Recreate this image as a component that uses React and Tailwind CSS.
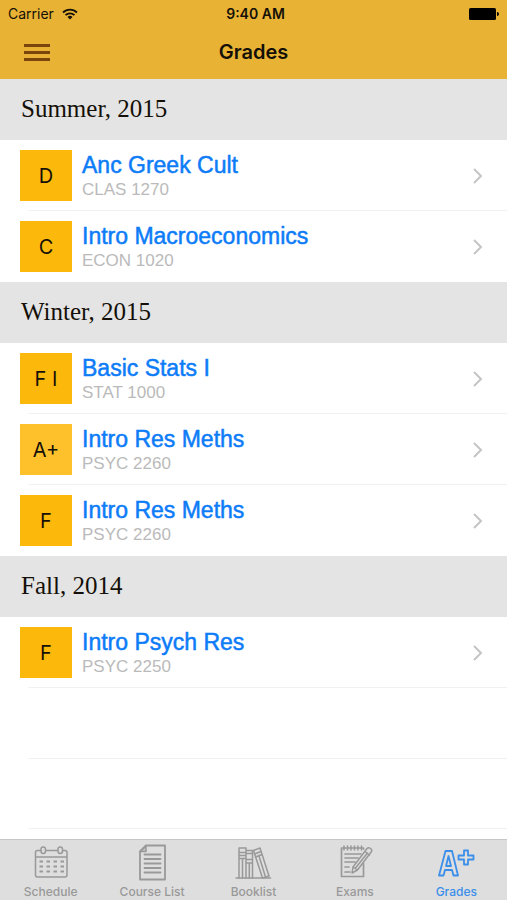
const terms = [
  {
    name: "Summer, 2015",
    courses: [
      { grade: "D", title: "Anc Greek Cult", code: "CLAS 1270" },
      { grade: "C", title: "Intro Macroeconomics", code: "ECON 1020" },
    ],
  },
  {
    name: "Winter, 2015",
    courses: [
      { grade: "F I", title: "Basic Stats I", code: "STAT 1000" },
      { grade: "A+", title: "Intro Res Meths", code: "PSYC 2260", light: true },
      { grade: "F", title: "Intro Res Meths", code: "PSYC 2260" },
    ],
  },
  {
    name: "Fall, 2014",
    courses: [{ grade: "F", title: "Intro Psych Res", code: "PSYC 2250" }],
  },
];

function Icon({ children }) {
  return (
    <svg
      aria-hidden="true"
      viewBox="0 0 36 36"
      className="h-9 w-9 overflow-visible"
      fill="none"
      stroke="currentColor"
      strokeWidth="1.5"
      strokeLinejoin="round"
      strokeLinecap="round"
    >
      {children}
    </svg>
  );
}

function ScheduleIcon() {
  return (
    <Icon>
      <path d="M8 6.5H4.5a2 2 0 0 0-2 2V31a2 2 0 0 0 2 2H32a2 2 0 0 0 2-2V8.5a2 2 0 0 0-2-2h-2.5M12.5 6.5h12M2.500 13H34" />
      <rect x="8" y="3" width="4.500" height="6.500" rx="2.200" />
      <rect x="25" y="3" width="4.500" height="6.500" rx="2.200" />
      <path
        d="M6.500 17.500h3.500M13.500 17.500h3.500M20.500 17.500H24M27.500 17.500H31M6.500 22.500h3.500M13.500 22.500h3.500M20.500 22.500H24M27.500 22.500H31M6.500 27.500h3.500M13.500 27.500h3.500M20.500 27.500H24M27.500 27.500H31"
        strokeWidth="1.800"
        strokeLinecap="butt"
      />
    </Icon>
  );
}

function CourseListIcon() {
  return (
    <Icon>
      <path d="M12 1.500h19v34H6V7.500z" strokeWidth="1.800" />
      <path d="M12 1.500v6H6z" fill="currentColor" fillOpacity="0.4" />
      <path d="M10.500 10.500h16M10.500 15h16M10.500 19.500h16M10.500 24h16M10.500 28.500h16" strokeWidth="1.800" />
    </Icon>
  );
}

function BooklistIcon() {
  return (
    <Icon>
      <path d="M1 34h34.500" />
      <path d="M4 34V4h7v30M11 6.500h6.500V34M4 8.500h7M4 11.500h7M4 14.500h7M11 9.500h6.500M11 15.500h6.500M11 19h6.500M7.500 14.500V34M14.300 19v15" />
      <path d="M18.500 6.500 25 4 34 32 27.500 34zM19.500 10l6.500-2.500M20.500 13l6.500-2.500M24 12l6.500 21" />
    </Icon>
  );
}

function ExamsIcon() {
  return (
    <Icon>
      <path d="M26.500 5V4H4.500V32.500h22V19.500" strokeWidth="1.700" />
      <path d="M7 2v4M10.500 2v4M14 2v4M17.500 2v4M21 2v4M24.500 2v4" />
      <path d="M8 10h16M8 14h13M8 18h10M8 23h4M8 28h5" strokeWidth="1.700" />
      <path d="m15 29 1-6L30 4.500q1.500-1.500 3.500 0t1 3L20.500 26zM16 23l4.500 3M28 7.500l4.500 3.500M18.500 24 30.500 9" />
    </Icon>
  );
}

function GradesIcon() {
  return (
    <Icon>
      <path d="M7.500 7h6.500L20 31.500h-4.500L14 26H7l-1.500 5.500H1zM10.500 12 8 22h5z" strokeWidth="1.800" />
      <path d="M26 6.500h4v5h5.500v4H30v5h-4v-5h-5.500v-4H26z" strokeWidth="1.800" />
    </Icon>
  );
}

const tabs = [
  { label: "Schedule", icon: ScheduleIcon },
  { label: "Course List", icon: CourseListIcon },
  { label: "Booklist", icon: BooklistIcon },
  { label: "Exams", icon: ExamsIcon },
  { label: "Grades", icon: GradesIcon, active: true },
];

function StatusBar() {
  return (
    <div className="grid h-7 grid-cols-[1fr_auto_1fr] items-center pr-1 pl-2 text-sm leading-4">
      <div className="flex items-center gap-2">
        <span>Carrier</span>
        <svg aria-label="Wi-Fi" viewBox="0 0 16 12" className="h-3 w-4" fill="none" stroke="currentColor" strokeWidth="1.800">
          <path d="M1 4.500a10 10 0 0 1 14 0M3.500 7.200a6.400 6.400 0 0 1 9 0" />
          <path d="M5.500 9a3.600 3.600 0 0 1 5 0L8 11.500z" fill="currentColor" stroke="none" />
        </svg>
      </div>
      <span className="text-center font-semibold">9:40 AM</span>
      <svg aria-label="Battery full" viewBox="0 0 30 12" className="mr-1 h-3 w-[30px] justify-self-end" fill="#000000">
        <rect width="27" height="12" rx="1.500" />
        <path d="M28 4q2 0 2 2t-2 2z" />
      </svg>
    </div>
  );
}

function CourseRow({ course }) {
  return (
    <li className="relative after:absolute after:right-0 after:bottom-0 after:left-7 after:h-px after:bg-[#f1f1f1] last:after:hidden">
      <a href="#course" className="flex h-[71px] items-center pr-6 pl-5">
        <span
          className={
            course.light
              ? "flex h-[51px] w-[52px] items-center justify-center bg-[#fec12b] text-xl"
              : "flex h-[51px] w-[52px] items-center justify-center bg-[#fdb80c] text-xl"
          }
        >
          {course.grade}
        </span>
        <span className="ml-[10px] flex flex-1 flex-col pt-px font-['Liberation_Sans',sans-serif]">
          <span className="text-[23px] leading-[26px] text-[#0d7cf8] [-webkit-text-stroke:0.5px_#0d7cf8]">{course.title}</span>
          <span className="text-[17px] leading-[23px] text-[#bababa]">{course.code}</span>
        </span>
        <svg aria-hidden="true" viewBox="0 0 10 16" className="h-4 w-[10px]" fill="none" stroke="#c4c4c7" strokeWidth="2">
          <path d="m1 1 7 7-7 7" />
        </svg>
      </a>
    </li>
  );
}

export default function App() {
  return (
    <div className="flex h-screen flex-col overflow-hidden bg-white font-['Inter',sans-serif] text-[#141008]">
      <header className="h-[79px] shrink-0 bg-[#e8b235]">
        <StatusBar />
        <div className="grid h-12 grid-cols-[1fr_auto_1fr] items-center px-6">
          <button type="button" aria-label="Menu" className="flex w-[26px] flex-col gap-1 text-[#7a450d]">
            <span className="h-[3px] w-full bg-current" />
            <span className="h-[3px] w-full bg-current" />
            <span className="h-[3px] w-full bg-current" />
          </button>
          <h1 className="text-xl font-semibold">Grades</h1>
        </div>
      </header>

      <main className="min-h-0 flex-1 overflow-hidden">
        {terms.map((term) => (
          <section key={term.name}>
            <h2 className="flex h-[61px] items-center bg-[#e4e4e4] px-[21px] pb-[2px] font-['Liberation_Serif',serif] text-[25px]">
              {term.name}
            </h2>
            <ul>
              {term.courses.map((course, i) => (
                <CourseRow key={i} course={course} />
              ))}
            </ul>
          </section>
        ))}
        <div className="-mt-px ml-7 h-[71px] border-t border-[#f1f1f1]" />
        <div className="ml-7 h-[71px] border-t border-b border-[#f1f1f1]" />
      </main>

      <nav className="grid h-[61px] shrink-0 grid-cols-5 border-t border-[#c6c6c6] bg-[#dedede]">
        {tabs.map(({ label, icon: TabIcon, active }) => (
          <a
            key={label}
            href="#tab"
            aria-current={active ? "page" : undefined}
            className={
              active
                ? "flex flex-col items-center gap-1 pt-1 text-[#3b8eea]"
                : "flex flex-col items-center gap-1 pt-1 text-[#999999]"
            }
          >
            <TabIcon />
            <span className="text-xs leading-4 font-medium">{label}</span>
          </a>
        ))}
      </nav>
    </div>
  );
}
